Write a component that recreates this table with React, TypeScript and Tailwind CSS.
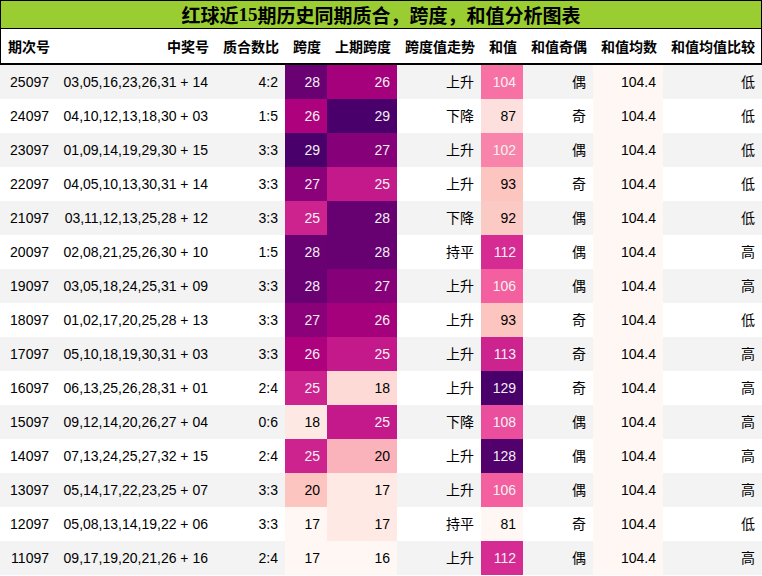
import React from 'react';

// RdPu colour stops (ColorBrewer 9-class), as used by pandas background_gradient
const RDPU = [
  [255, 247, 243],
  [253, 224, 221],
  [252, 197, 192],
  [250, 159, 181],
  [247, 104, 161],
  [221, 52, 151],
  [174, 1, 126],
  [122, 1, 119],
  [73, 0, 106],
];

function rdpu(v: number, min: number, max: number) {
  const x = max === min ? 0 : (v - min) / (max - min);
  const pos = x * (RDPU.length - 1);
  const i = Math.min(Math.floor(pos), RDPU.length - 2);
  const t = pos - i;
  const c = RDPU[i].map((a, k) => Math.round(a + (RDPU[i + 1][k] - a) * t));
  const lin = (n: number) => {
    const s = n / 255;
    return s <= 0.03928 ? s / 12.92 : Math.pow((s + 0.055) / 1.055, 2.4);
  };
  const lum = 0.2126 * lin(c[0]) + 0.7152 * lin(c[1]) + 0.0722 * lin(c[2]);
  return {
    backgroundColor: `rgb(${c[0]},${c[1]},${c[2]})`,
    color: lum < 0.408 ? '#f1f1f1' : '#000000',
  };
}

type Row = [string, string, string, number, number, string, number, string, string, string];

const rows: Row[] = [
  ['25097', '03,05,16,23,26,31 + 14', '4:2', 28, 26, '上升', 104, '偶', '104.4', '低'],
  ['24097', '04,10,12,13,18,30 + 03', '1:5', 26, 29, '下降', 87, '奇', '104.4', '低'],
  ['23097', '01,09,14,19,29,30 + 15', '3:3', 29, 27, '上升', 102, '偶', '104.4', '低'],
  ['22097', '04,05,10,13,30,31 + 14', '3:3', 27, 25, '上升', 93, '奇', '104.4', '低'],
  ['21097', '03,11,12,13,25,28 + 12', '3:3', 25, 28, '下降', 92, '偶', '104.4', '低'],
  ['20097', '02,08,21,25,26,30 + 10', '1:5', 28, 28, '持平', 112, '偶', '104.4', '高'],
  ['19097', '03,05,18,24,25,31 + 09', '3:3', 28, 27, '上升', 106, '偶', '104.4', '高'],
  ['18097', '01,02,17,20,25,28 + 13', '3:3', 27, 26, '上升', 93, '奇', '104.4', '低'],
  ['17097', '05,10,18,19,30,31 + 03', '3:3', 26, 25, '上升', 113, '奇', '104.4', '高'],
  ['16097', '06,13,25,26,28,31 + 01', '2:4', 25, 18, '上升', 129, '奇', '104.4', '高'],
  ['15097', '09,12,14,20,26,27 + 04', '0:6', 18, 25, '下降', 108, '偶', '104.4', '高'],
  ['14097', '07,13,24,25,27,32 + 15', '2:4', 25, 20, '上升', 128, '偶', '104.4', '高'],
  ['13097', '05,14,17,22,23,25 + 07', '3:3', 20, 17, '上升', 106, '偶', '104.4', '高'],
  ['12097', '05,08,13,14,19,22 + 06', '3:3', 17, 17, '持平', 81, '奇', '104.4', '低'],
  ['11097', '09,17,19,20,21,26 + 16', '2:4', 17, 16, '上升', 112, '偶', '104.4', '高'],
];

const headers = ['期次号', '中奖号', '质合数比', '跨度', '上期跨度', '跨度值走势', '和值', '和值奇偶', '和值均数', '和值均值比较'];

const range = (k: 3 | 4 | 6) => {
  const vals = rows.map((r) => r[k] as number);
  return [Math.min(...vals), Math.max(...vals)] as const;
};

export default function App() {
  const [spanMin, spanMax] = range(3);
  const [prevMin, prevMax] = range(4);
  const [sumMin, sumMax] = range(6);

  return (
    <div className="w-[762px] h-[576px] overflow-hidden bg-white text-black font-['Liberation_Sans','Noto_Sans_CJK_SC',sans-serif]">
      {/* Title */}
      <div className="h-[29px] border border-black bg-[#9acd32] flex items-center justify-center text-[19px] font-bold font-['Noto_Sans_CJK_SC',sans-serif] leading-none">
        红球近<span className="font-['Liberation_Serif',serif]">15</span>期历史同期质合，跨度，和值分析图表
      </div>

      {/* Header */}
      <div className="grid grid-cols-[55px_159px_70px_42px_70px_84px_42px_70px_70px_98px] h-[36px] border-x border-b-2 border-black text-[14px] font-bold font-['Noto_Sans_CJK_SC',sans-serif]">
        {headers.map((h) => (
          <div key={h} className="flex items-center justify-end pr-[6px] whitespace-nowrap">
            {h}
          </div>
        ))}
      </div>

      {/* Rows */}
      {rows.map((r, idx) => (
        <div
          key={r[0]}
          className={`grid grid-cols-[56px_159px_70px_42px_70px_84px_42px_70px_70px_99px] h-[34px] text-[14px] ${idx % 2 === 0 ? 'bg-[#f3f3f3]' : 'bg-white'}`}
        >
          <Cell>{r[0]}</Cell>
          <Cell>{r[1]}</Cell>
          <Cell>{r[2]}</Cell>
          <Cell style={rdpu(r[3], spanMin, spanMax)}>{r[3]}</Cell>
          <Cell style={rdpu(r[4], prevMin, prevMax)}>{r[4]}</Cell>
          <Cell>{r[5]}</Cell>
          <Cell style={rdpu(r[6], sumMin, sumMax)}>{r[6]}</Cell>
          <Cell>{r[7]}</Cell>
          <Cell style={rdpu(104.4, 104.4, 104.4)}>{r[8]}</Cell>
          <Cell>{r[9]}</Cell>
        </div>
      ))}
    </div>
  );
}

function Cell({ children, style }: { children: React.ReactNode; style?: React.CSSProperties }) {
  return (
    <div className="flex items-center justify-end pr-[7px] whitespace-nowrap" style={style}>
      {children}
    </div>
  );
}
